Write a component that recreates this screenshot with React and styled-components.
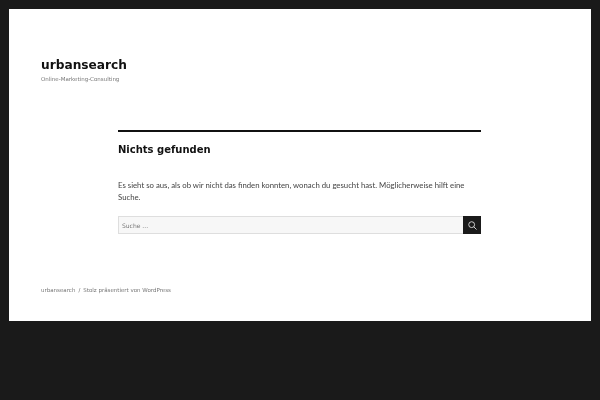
import React from "react";
import styled, { createGlobalStyle } from "styled-components";

const GlobalStyle = createGlobalStyle`
  html, body {
    margin: 0;
    height: 100%;
    background: #1a1a1a;
  }
  body {
    font-family: "DejaVu Sans", sans-serif;
    color: #111;
  }
`;

const Page = styled.div`
  width: 600px;
  height: 400px;
  box-sizing: border-box;
  padding: 9px;
  overflow: hidden;
`;

const Site = styled.div`
  background: #fff;
  height: 312px;
  box-sizing: border-box;
  padding: 48px 32px 0;
  display: flex;
  flex-direction: column;
`;

const SiteTitle = styled.div`
  font-size: 12.2px;
  font-weight: 700;
  line-height: 16px;
  will-change: transform;
`;

const Tagline = styled.div`
  margin-top: 1px;
  font-size: 5.5px;
  line-height: 11px;
  color: #777;
  will-change: transform;
`;

const Main = styled.main`
  margin: 45px 78px 0 77px;
  border-top: 2px solid #111;
`;

const Heading = styled.h1`
  margin: 10px 0 0;
  font-size: 10px;
  line-height: 16px;
  font-weight: 700;
  will-change: transform;
`;

const Message = styled.p`
  margin: 21px 0 0;
  font-family: "Lato", sans-serif;
  font-size: 7.77px;
  line-height: 12px;
  color: #444;
  will-change: transform;
`;

const SearchForm = styled.form`
  margin: 13px 0 0;
  display: flex;
  height: 18px;
`;

const SearchInput = styled.input`
  flex: 1;
  min-width: 0;
  box-sizing: border-box;
  height: 18px;
  padding: 0 3px;
  background: #f7f7f7;
  border: 1px solid #dedede;
  border-right: 0;
  outline: none;
  font-family: "DejaVu Sans", sans-serif;
  font-size: 6px;
  will-change: transform;
  &::placeholder {
    color: #777;
    opacity: 1;
  }
`;

const SearchButton = styled.button`
  width: 18px;
  height: 18px;
  padding: 0;
  border: 0;
  background: #1a1a1a;
  display: flex;
  align-items: center;
  justify-content: center;
`;

const Footer = styled.footer`
  margin-top: 51px;
  display: flex;
  align-items: center;
  font-size: 5.5px;
  line-height: 11px;
  color: #777;
  will-change: transform;
`;

const Slash = styled.span`
  margin: 0 3px;
  font-size: 5.5px;
`;

export default function App() {
  return (
    <Page>
      <GlobalStyle />
      <Site>
        <SiteTitle>urbansearch</SiteTitle>
        <Tagline>Online-Marketing-Consulting</Tagline>
        <Main>
          <Heading>Nichts gefunden</Heading>
          <Message>
            Es sieht so aus, als ob wir nicht das finden konnten, wonach du gesucht hast. Möglicherweise hilft eine Suche.
          </Message>
          <SearchForm onSubmit={(e) => e.preventDefault()}>
            <SearchInput placeholder="Suche ..." />
            <SearchButton type="button" aria-label="Suchen">
              <svg width="9" height="9" viewBox="0 0 16 16" fill="none" stroke="#ddd" strokeWidth="1.6">
                <circle cx="6.5" cy="6.5" r="5.2" />
                <path d="M10.2 10.2l5 5" />
              </svg>
            </SearchButton>
          </SearchForm>
        </Main>
        <Footer>
          <span>urbansearch</span>
          <Slash>/</Slash>
          <span>Stolz präsentiert von WordPress</span>
        </Footer>
      </Site>
    </Page>
  );
}
